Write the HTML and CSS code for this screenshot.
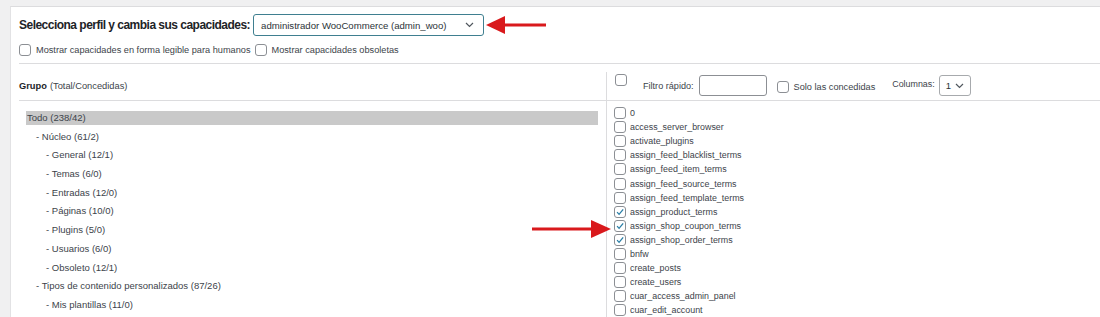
FILE: index.html
```html
<!DOCTYPE html>
<html lang="es">
<head>
  <meta charset="UTF-8" />
  <title>Editor de capacidades</title>
  <link rel="stylesheet" href="styles.css">
</head>
<body>
  <div class="panel">
    <div class="profile-row">
      <span class="profile-title">Selecciona perfil y cambia sus capacidades:</span>
      <div class="select role-select">
        <span>administrador WooCommerce (admin_woo)</span>
        <svg class="chev" width="9" height="6" viewBox="0 0 9 6"><path d="M1 1l3.5 3.5L8 1" fill="none" stroke="#50575e" stroke-width="1.2"/></svg>
      </div>
    </div>

    <div class="options-row">
      <label class="opt"><span class="cb"></span>Mostrar capacidades en forma legible para humanos</label>
      <label class="opt"><span class="cb"></span>Mostrar capacidades obsoletas</label>
    </div>

    <div class="editor">
      <div class="groups">
        <div class="groups-head"><b>Grupo</b> (Total/Concedidas)</div>
        <ul class="group-list">
          <li class="lvl0"><span class="current">Todo (238/42)</span></li>
          <li class="lvl1">- Núcleo (61/2)</li>
          <li class="lvl2">- General (12/1)</li>
          <li class="lvl2">- Temas (6/0)</li>
          <li class="lvl2">- Entradas (12/0)</li>
          <li class="lvl2">- Páginas (10/0)</li>
          <li class="lvl2">- Plugins (5/0)</li>
          <li class="lvl2">- Usuarios (6/0)</li>
          <li class="lvl2">- Obsoleto (12/1)</li>
          <li class="lvl1">- Tipos de contenido personalizados (87/26)</li>
          <li class="lvl2">- Mis plantillas (11/0)</li>
        </ul>
      </div>

      <div class="caps">
        <div class="caps-head">
          <span class="cb head-cb"></span>
          <span class="filter-label">Filtro rápido:</span>
          <div class="filter-input"></div>
          <label class="opt granted"><span class="cb"></span>Solo las concedidas</label>
          <span class="cols-label">Columnas:</span>
          <div class="select cols-select">
            <span>1</span>
            <svg class="chev" width="9" height="6" viewBox="0 0 9 6"><path d="M1 1l3.5 3.5L8 1" fill="none" stroke="#50575e" stroke-width="1.2"/></svg>
          </div>
        </div>
        <ul class="cap-list">
          <li><span class="cb"></span>0</li>
          <li><span class="cb"></span>access_server_browser</li>
          <li><span class="cb"></span>activate_plugins</li>
          <li><span class="cb"></span>assign_feed_blacklist_terms</li>
          <li><span class="cb"></span>assign_feed_item_terms</li>
          <li><span class="cb"></span>assign_feed_source_terms</li>
          <li><span class="cb"></span>assign_feed_template_terms</li>
          <li><span class="cb checked"><svg viewBox="0 0 12 12"><path d="M2.5 6.2l2.4 2.6L9.8 2.8" fill="none" stroke="#2a7ea6" stroke-width="1.6"/></svg></span>assign_product_terms</li>
          <li><span class="cb checked"><svg viewBox="0 0 12 12"><path d="M2.5 6.2l2.4 2.6L9.8 2.8" fill="none" stroke="#2a7ea6" stroke-width="1.6"/></svg></span>assign_shop_coupon_terms</li>
          <li><span class="cb checked"><svg viewBox="0 0 12 12"><path d="M2.5 6.2l2.4 2.6L9.8 2.8" fill="none" stroke="#2a7ea6" stroke-width="1.6"/></svg></span>assign_shop_order_terms</li>
          <li><span class="cb"></span>bnfw</li>
          <li><span class="cb"></span>create_posts</li>
          <li><span class="cb"></span>create_users</li>
          <li><span class="cb"></span>cuar_access_admin_panel</li>
          <li><span class="cb"></span>cuar_edit_account</li>
        </ul>
      </div>
    </div>
  </div>

  <!-- red annotation arrows -->
  <svg class="arrow arrow-top" width="62" height="20" viewBox="0 0 62 20">
    <path d="M61 10H17" stroke="#d9191c" stroke-width="3"/>
    <path d="M1 10L20 1V19Z" fill="#d9191c"/>
  </svg>
  <svg class="arrow arrow-mid" width="81" height="20" viewBox="0 0 81 20">
    <path d="M1 10H62" stroke="#d9191c" stroke-width="3"/>
    <path d="M80 10L60 1V19Z" fill="#d9191c"/>
  </svg>
</body>
</html>
```

FILE: styles.css
```css
* {
  margin: 0;
  padding: 0;
  box-sizing: border-box;
}

body {
  background: #f0f0f1;
  font-family: 'Liberation Sans', Arial, sans-serif;
  color: #3c434a;
  padding: 6px 0 0 10px;
  height: 317px;
  overflow: hidden;
  position: relative;
}

.panel {
  background: #fff;
  border-top: 1px solid #dcdcde;
  border-left: 1px solid #e2e2e4;
  padding-left: 8px;
  height: 320px;
}

.profile-row {
  display: flex;
  align-items: center;
  gap: 3px;
  padding-top: 7px;
  height: 29px;
}

.profile-title {
  font-size: 12px;
  font-weight: bold;
  color: #1d2327;
  letter-spacing: -0.52px;
}

.select {
  display: flex;
  align-items: center;
  justify-content: space-between;
  border: 1px solid #8c8f94;
  border-radius: 3px;
  background: #fff;
  color: #2c3338;
  white-space: nowrap;
}

.role-select {
  width: 231px;
  height: 22px;
  padding: 0 9px 0 7px;
  font-size: 9.6px;
  border-color: #3f7f90;
}

.options-row {
  display: flex;
  align-items: center;
  gap: 4px;
  height: 28px;
  padding-top: 1px;
  border-bottom: 1px solid #dcdcde;
}

.opt {
  display: flex;
  align-items: center;
  gap: 5px;
  font-size: 9.2px;
  color: #3c434a;
}

.cb {
  display: inline-block;
  flex: none;
  width: 12px;
  height: 12px;
  border: 1px solid #8c8f94;
  border-radius: 3px;
  background: #fff;
}

.cb svg {
  display: block;
  width: 10px;
  height: 10px;
}

.editor {
  display: grid;
  grid-template-columns: 587px 1fr;
}

.groups-head {
  height: 37px;
  display: flex;
  align-items: center;
  padding-top: 8px;
  font-size: 9.3px;
  color: #3c434a;
  border-bottom: 1px solid #dcdcde;
}

.groups-head b {
  color: #1d2327;
  margin-right: 3px;
}

.group-list {
  list-style: none;
  padding: 10px 8px 0 7px;
  font-size: 9.5px;
  color: #3c434a;
}

.group-list li {
  line-height: 14px;
  margin-bottom: 4.7px;
}

.group-list .current {
  display: block;
  background: #c9c9c9;
  padding-left: 1px;
}

.lvl1 { padding-left: 10px; }
.lvl2 { padding-left: 20px; }

.caps {
  margin-top: 8px;
  border-left: 1px solid #dcdcde;
}

.caps-head {
  height: 29px;
  display: flex;
  align-items: flex-start;
  padding: 2px 0 0 8px;
  border-bottom: 1px solid #dcdcde;
  font-size: 9.1px;
  color: #3c434a;
}

.filter-label {
  margin: 7px 0 0 16px;
}

.filter-input {
  width: 68px;
  height: 21px;
  margin: 1px 0 0 5px;
  border: 1px solid #8c8f94;
  border-radius: 3px;
}

.caps-head .granted {
  margin: 7px 0 0 10px;
}

.cols-label {
  margin: 5px 0 0 17px;
  font-size: 8.9px;
}

.cols-select {
  width: 32px;
  height: 21px;
  margin: 1px 0 0 4px;
  padding: 0 6px;
  font-size: 9.5px;
  border-color: #a7aaad;
}

.cap-list {
  list-style: none;
  padding: 5px 0 0 7px;
  font-size: 8.9px;
  color: #3c434a;
}

.cap-list li {
  display: flex;
  align-items: center;
  gap: 4px;
  height: 14.1px;
}

.arrow {
  position: absolute;
}

.arrow-top {
  left: 485px;
  top: 15px;
}

.arrow-mid {
  left: 531px;
  top: 219px;
}
```
